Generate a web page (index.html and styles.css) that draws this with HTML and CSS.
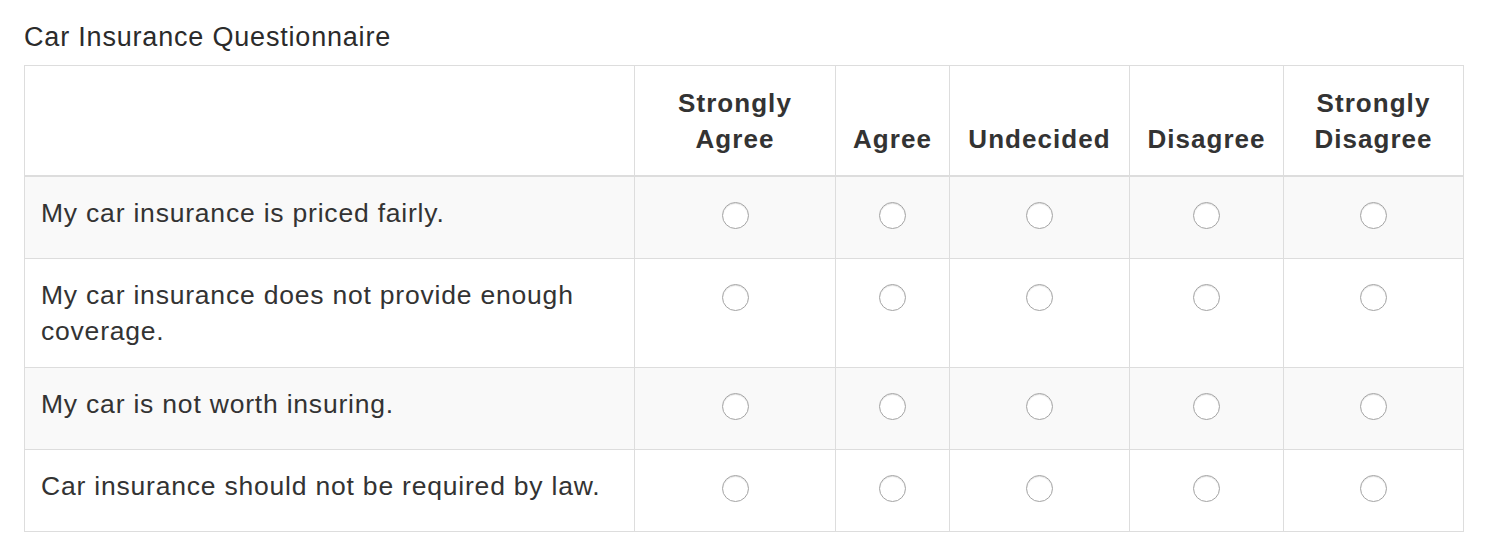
FILE: index.html
```html
<!DOCTYPE html>
<html lang="en">
<head>
<meta charset="utf-8">
<title>Car Insurance Questionnaire</title>
<link rel="stylesheet" href="styles.css">
</head>
<body>
<div class="page">
  <div class="title">Car Insurance Questionnaire</div>
  <table class="survey">
    <colgroup>
      <col class="c-q">
      <col class="c-sa">
      <col class="c-a">
      <col class="c-u">
      <col class="c-d">
      <col class="c-sd">
    </colgroup>
    <thead>
      <tr>
        <th></th>
        <th>Strongly Agree</th>
        <th>Agree</th>
        <th>Undecided</th>
        <th>Disagree</th>
        <th>Strongly Disagree</th>
      </tr>
    </thead>
    <tbody>
      <tr>
        <td class="q">My car insurance is priced fairly.</td>
        <td class="r"><span class="rw"><input type="radio" name="q1"></span></td>
        <td class="r"><span class="rw"><input type="radio" name="q1"></span></td>
        <td class="r"><span class="rw"><input type="radio" name="q1"></span></td>
        <td class="r"><span class="rw"><input type="radio" name="q1"></span></td>
        <td class="r"><span class="rw"><input type="radio" name="q1"></span></td>
      </tr>
      <tr>
        <td class="q">My car insurance does not provide enough coverage.</td>
        <td class="r"><span class="rw"><input type="radio" name="q2"></span></td>
        <td class="r"><span class="rw"><input type="radio" name="q2"></span></td>
        <td class="r"><span class="rw"><input type="radio" name="q2"></span></td>
        <td class="r"><span class="rw"><input type="radio" name="q2"></span></td>
        <td class="r"><span class="rw"><input type="radio" name="q2"></span></td>
      </tr>
      <tr>
        <td class="q">My car is not worth insuring.</td>
        <td class="r"><span class="rw"><input type="radio" name="q3"></span></td>
        <td class="r"><span class="rw"><input type="radio" name="q3"></span></td>
        <td class="r"><span class="rw"><input type="radio" name="q3"></span></td>
        <td class="r"><span class="rw"><input type="radio" name="q3"></span></td>
        <td class="r"><span class="rw"><input type="radio" name="q3"></span></td>
      </tr>
      <tr>
        <td class="q">Car insurance should not be required by law.</td>
        <td class="r"><span class="rw"><input type="radio" name="q4"></span></td>
        <td class="r"><span class="rw"><input type="radio" name="q4"></span></td>
        <td class="r"><span class="rw"><input type="radio" name="q4"></span></td>
        <td class="r"><span class="rw"><input type="radio" name="q4"></span></td>
        <td class="r"><span class="rw"><input type="radio" name="q4"></span></td>
      </tr>
    </tbody>
  </table>
</div>
</body>
</html>
```
FILE: styles.css
```css
html, body {
  margin: 0;
  padding: 0;
  background: #fff;
}

body {
  font-family: "Liberation Sans", Arial, Helvetica, sans-serif;
  color: #333;
}

.page {
  padding: 19px 0 0 24px;
}

.title {
  font-size: 27px;
  line-height: 36px;
  letter-spacing: 0.03em;
  color: #2b2b2b;
  margin-bottom: 10px;
}

.survey {
  width: 1439px;
  table-layout: fixed;
  border-collapse: collapse;
  border: 1px solid #ddd;
  font-size: 26.5px;
  line-height: 36px;
  letter-spacing: 0.03em;
}

.c-q { width: 610px; }
.c-sa { width: 201px; }
.c-a { width: 114px; }
.c-u { width: 180px; }
.c-d { width: 154px; }
.c-sd { width: 180px; }

.survey th,
.survey td {
  border: 1px solid #ddd;
  padding: 18px 16px;
}

.survey th {
  font-size: 26px;
  font-weight: bold;
  text-align: center;
  vertical-align: bottom;
  letter-spacing: 0.04em;
  border-bottom: 2px solid #ddd;
  padding-top: 19px;
}

.survey td {
  vertical-align: top;
}

.survey tbody tr:nth-child(odd) {
  background: #f9f9f9;
}

.survey td.r {
  text-align: center;
}

.rw {
  display: block;
  height: 45px;
}

.rw input {
  -webkit-appearance: none;
  appearance: none;
  display: inline-block;
  width: 27px;
  height: 27px;
  margin: 7px 0 0;
  border: 1px solid #a4a4a4;
  border-radius: 50%;
  background: #fff;
  box-shadow: inset 0 1px 1px rgba(0, 0, 0, 0.12);
  vertical-align: top;
}
```
